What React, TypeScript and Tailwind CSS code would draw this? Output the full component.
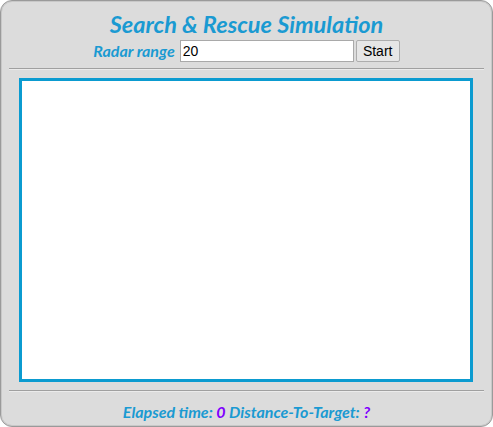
import React from "react";

export default function App() {
  const font = { fontFamily: "Lato, 'Open Sans', sans-serif" };
  return (
    <div className="w-[493px] h-[427px] bg-[#dcdcdc] border border-[#9a9a9a] rounded-[12px] shadow-[inset_0_0_0_1px_#c8c8c8] flex flex-col items-center overflow-hidden">
      <div
        className="mt-[9px] h-[29px] leading-[29px] text-[23.5px] font-bold italic text-[#1a9ad2]"
        style={font}
      >
        Search &amp; Rescue Simulation
      </div>
      <div className="mt-[1px] flex items-center h-[22px]">
        <span className="text-[16px] font-bold italic text-[#1a9ad2] mr-[5px]" style={font}>
          Radar range
        </span>
        <input
          defaultValue="20"
          className="w-[174px] h-[22px] bg-white border border-[#a9a9a9] px-[2px] text-[14px] text-black outline-none"
          style={{ fontFamily: "'Liberation Sans', Arial, sans-serif" }}
        />
        <button
          className="ml-[2px] w-[44px] h-[22px] bg-[#e6e6e6] border border-[#adadad] rounded-[2px] text-[14px] text-black"
          style={{ fontFamily: "'Liberation Sans', Arial, sans-serif" }}
        >
          Start
        </button>
      </div>
      <div className="self-start ml-[8px] mt-[6px] w-[475px] h-[1px] bg-[#a0a0a0] shadow-[0_1px_0_#ebebeb]" />
      <div className="self-start ml-[18px] mt-[9px] w-[454px] h-[304px] bg-white border-[3px] border-[#0b9bd0]" />
      <div className="self-start ml-[8px] mt-[8px] w-[475px] h-[1px] bg-[#a0a0a0] shadow-[0_1px_0_#ebebeb]" />
      <div className="mt-[9px] text-[16px] font-bold italic text-[#1a9ad2]" style={font}>
        Elapsed time: <span className="text-[#8000ff]">0</span> Distance-To-Target:{" "}
        <span className="text-[#8000ff]">?</span>
      </div>
    </div>
  );
}
